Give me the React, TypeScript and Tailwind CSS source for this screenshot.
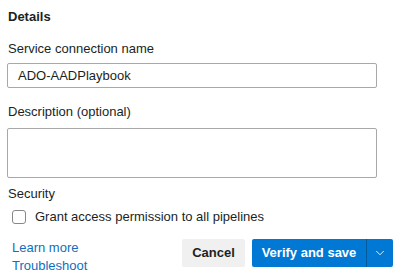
import { ChevronDown } from 'lucide-react'

export default function App() {
  return (
    <div className="w-[400px] h-[279px] bg-white overflow-hidden px-2 pt-2 text-[13px] text-[#201f1e] font-['Liberation_Sans','Inter',sans-serif]">
      <h2 className="font-bold leading-[18px]">Details</h2>

      <label className="block mt-[14px] leading-[18px]">Service connection name</label>
      <div className="mt-[5px] w-[370px] h-[25px] -ml-px border border-[#a8a8a8] rounded-[2px] flex items-center px-[10px]">
        ADO-AADPlaybook
      </div>

      <label className="block mt-[15px] leading-[18px]">Description (optional)</label>
      <div className="mt-[7px] w-[370px] h-[50px] -ml-px border border-[#a8a8a8] rounded-[2px]" />

      <div className="mt-[7px] leading-[18px]">Security</div>
      <div className="mt-[5px] h-[18px] flex items-center gap-[9px] pl-1">
        <span className="w-[14px] h-[14px] border border-[#8a8886] rounded-[3px] bg-white" />
        <span>Grant access permission to all pipelines</span>
      </div>

      <div className="mt-[13px] flex items-start justify-between pl-1">
        <div className="flex flex-col leading-[18px] text-[#106ebe]">
          <a>Learn more</a>
          <a>Troubleshoot</a>
        </div>
        <div className="flex gap-[7px] -mr-px">
          <button className="h-[28px] w-[63px] rounded-[2px] bg-[#f0f0f0] font-bold text-[#201f1e]">
            Cancel
          </button>
          <div className="flex h-[28px] rounded-[2px] bg-[#0078d4] text-white">
            <button className="w-[114px] font-bold">Verify and save</button>
            <span className="w-px bg-[#005a9e]" />
            <button className="w-[26px] flex items-center justify-center">
              <ChevronDown size={14} strokeWidth={1.5} />
            </button>
          </div>
        </div>
      </div>
    </div>
  )
}
